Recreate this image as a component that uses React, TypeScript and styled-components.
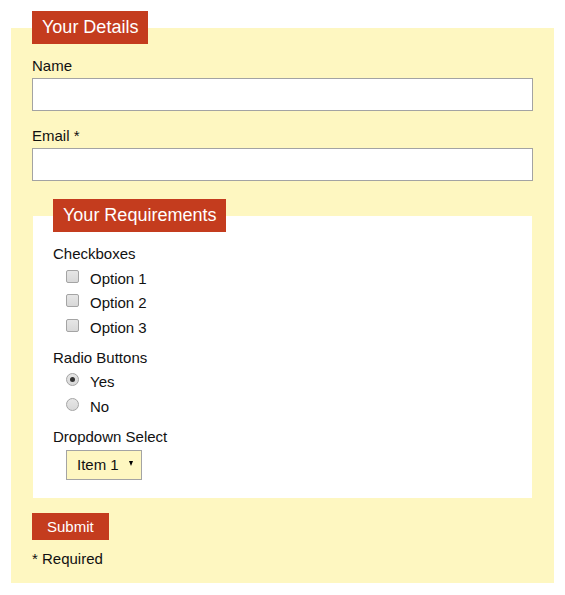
import React from "react";
import styled, { createGlobalStyle } from "styled-components";

const GlobalStyle = createGlobalStyle`
  body {
    margin: 0;
    background: #fff;
    font-family: "Liberation Sans", Arial, sans-serif;
    font-size: 15px;
    color: #111;
  }
`;

const Page = styled.form`
  padding: 11px;
`;

const Fieldset = styled.fieldset<{ inner?: boolean }>`
  margin: ${(p) => (p.inner ? "18px 1px 0" : "0")};
  padding: ${(p) => (p.inner ? "9px 20px 18px" : "13px 21px 16px")};
  border: none;
  background: ${(p) => (p.inner ? "#fff" : "#fef7c1")};
  min-width: 0;
`;

const Legend = styled.legend`
  background: #c43c1e;
  color: #fff;
  font-size: 18px;
  padding: 6px 10px;
  line-height: 21px;
`;

const FieldLabel = styled.label`
  display: block;
  line-height: 17px;
  margin-bottom: 4px;
`;

const TextInput = styled.input<{ last?: boolean }>`
  display: block;
  box-sizing: border-box;
  width: 100%;
  height: 33px;
  margin: 0 0 ${(p) => (p.last ? "0" : "16px")};
  border: 1px solid #a3a3a3;
  background: #fff;
  font: inherit;
  padding: 4px 6px;
`;

const Group = styled.div`
  & + & {
    margin-top: 5px;
  }
`;

const GroupLabel = styled.div`
  line-height: 25px;
`;

const OptionRow = styled.label`
  display: flex;
  align-items: center;
  height: 24.5px;
  padding-left: 13px;
  gap: 11px;
`;

const Box = styled.input`
  appearance: none;
  margin: 0;
  width: 13px;
  height: 13px;
  box-sizing: border-box;
  border: 1px solid #a4a4a4;
  background: linear-gradient(#e6e6e6, #d8d8d8);
  position: relative;
  top: -2px;
  border-radius: ${(p) => (p.type === "radio" ? "50%" : "2px")};

  &:checked::after {
    content: "";
    position: absolute;
    left: 3px;
    top: 3px;
    width: 5px;
    height: 5px;
    border-radius: 50%;
    background: #333;
  }
`;

const SelectWrap = styled.div`
  position: relative;
  display: inline-block;
  vertical-align: top;
  margin: 1px 0 0 13px;
`;

const Select = styled.select`
  appearance: none;
  display: block;
  box-sizing: border-box;
  width: 76px;
  height: 30px;
  border: 1px solid #a4a4a4;
  background: #fef7c1;
  font: inherit;
  color: #111;
  padding: 0 0 0 10px;
  border-radius: 0;
`;

const Arrow = styled.span`
  position: absolute;
  right: 9px;
  top: 11px;
  width: 0;
  height: 0;
  border-left: 2.5px solid transparent;
  border-right: 2.5px solid transparent;
  border-top: 5px solid #000;
  pointer-events: none;
`;

const SubmitButton = styled.button`
  margin-top: 15px;
  background: #c43c1e;
  color: #fff;
  border: none;
  font: inherit;
  line-height: 17px;
  padding: 5px 15px;
  border-radius: 0;
  display: block;
`;

const Note = styled.p`
  margin: 10px 0 0;
  line-height: 17px;
`;

export default function App() {
  return (
    <>
      <GlobalStyle />
      <Page onSubmit={(e) => e.preventDefault()}>
        <Fieldset>
          <Legend>Your Details</Legend>
          <FieldLabel htmlFor="name">Name</FieldLabel>
          <TextInput id="name" type="text" />
          <FieldLabel htmlFor="email">Email *</FieldLabel>
          <TextInput id="email" type="email" last />

          <Fieldset inner>
            <Legend>Your Requirements</Legend>
            <Group>
              <GroupLabel>Checkboxes</GroupLabel>
              {["Option 1", "Option 2", "Option 3"].map((o) => (
                <OptionRow key={o}>
                  <Box type="checkbox" />
                  {o}
                </OptionRow>
              ))}
            </Group>
            <Group>
              <GroupLabel>Radio Buttons</GroupLabel>
              <OptionRow>
                <Box type="radio" name="yn" defaultChecked />
                Yes
              </OptionRow>
              <OptionRow>
                <Box type="radio" name="yn" />
                No
              </OptionRow>
            </Group>
            <Group>
              <GroupLabel>Dropdown Select</GroupLabel>
              <SelectWrap>
                <Select defaultValue="1">
                  <option value="1">Item 1</option>
                  <option value="2">Item 2</option>
                  <option value="3">Item 3</option>
                </Select>
                <Arrow />
              </SelectWrap>
            </Group>
          </Fieldset>

          <SubmitButton type="submit">Submit</SubmitButton>
          <Note>* Required</Note>
        </Fieldset>
      </Page>
    </>
  );
}
